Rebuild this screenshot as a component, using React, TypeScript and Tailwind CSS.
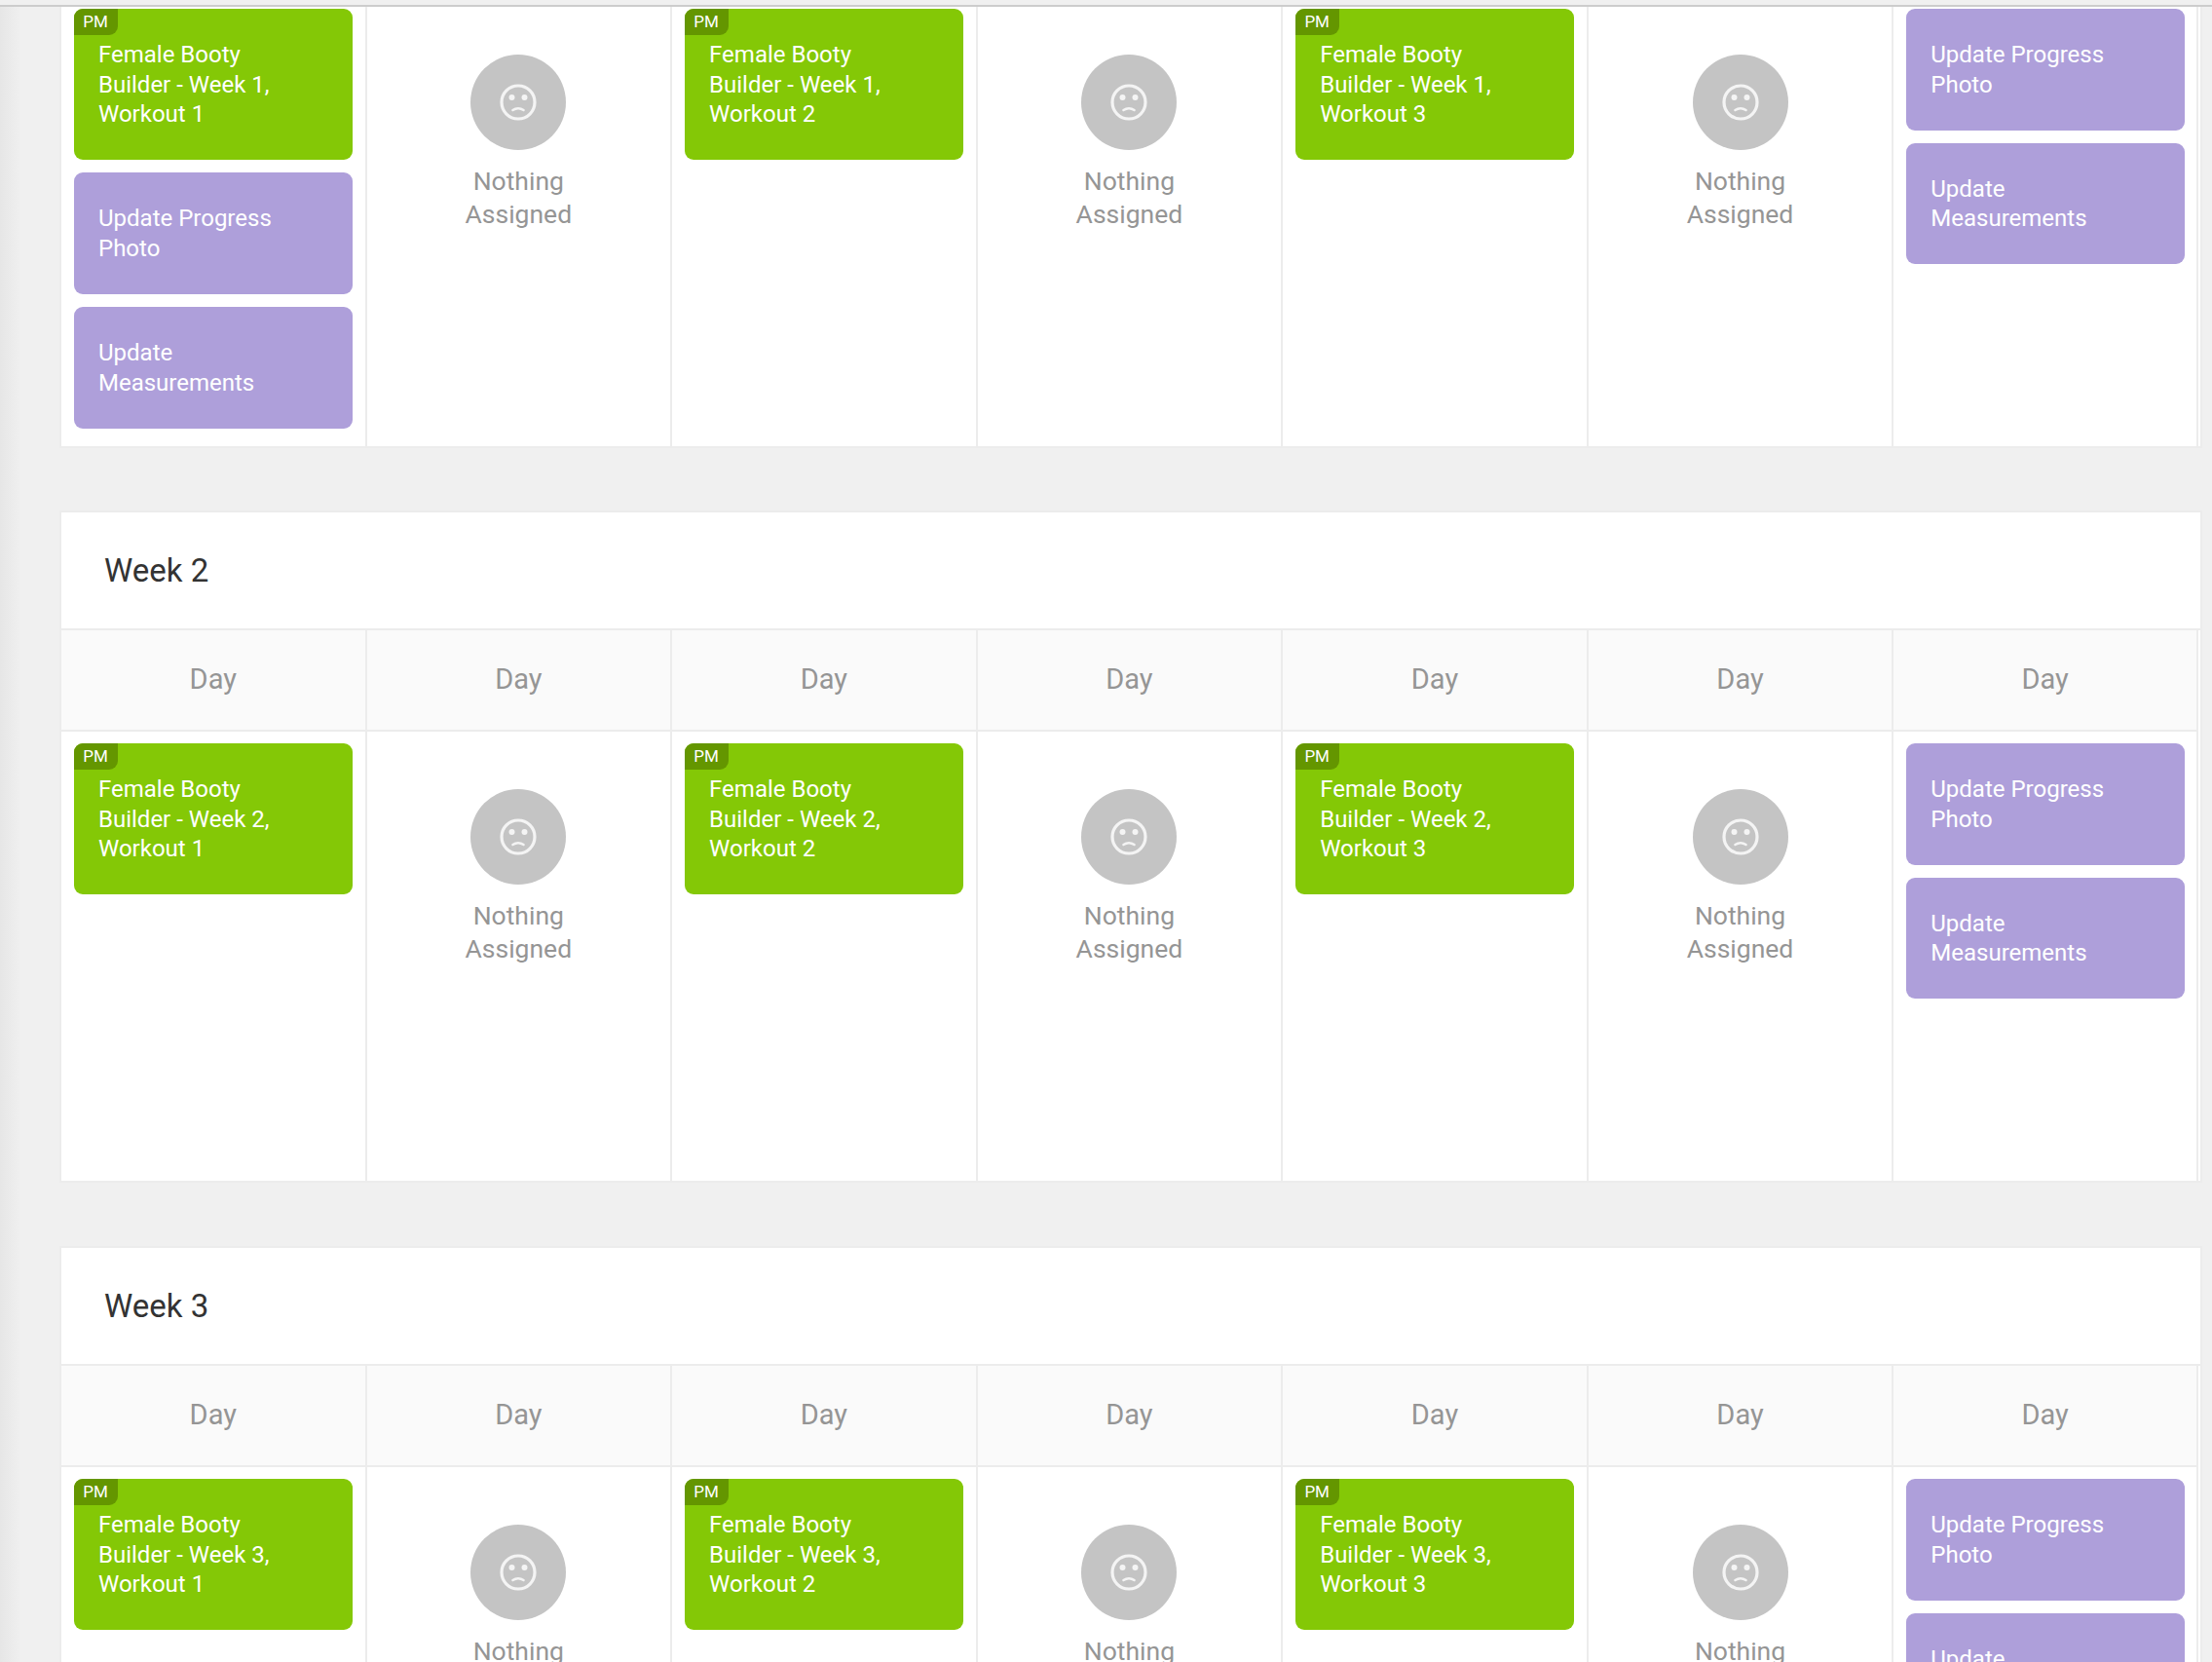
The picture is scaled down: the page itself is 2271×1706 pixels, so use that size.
const DAYS = [0, 1, 2, 3, 4, 5, 6];

function SadFace() {
  return (
    <svg width="40" height="40" viewBox="0 0 40 40" fill="none">
      <circle cx="20" cy="20" r="17" stroke="#f4f4f4" strokeWidth="3.2" />
      <circle cx="13.5" cy="15" r="3" fill="#f4f4f4" />
      <circle cx="26.5" cy="15" r="3" fill="#f4f4f4" />
      <path d="M14.5 28 Q20 24.5 25.5 28" stroke="#f4f4f4" strokeWidth="2.6" strokeLinecap="round" />
    </svg>
  );
}

function Nothing() {
  return (
    <div className="flex flex-col items-center pt-[59px]">
      <div className="flex h-[98px] w-[98px] items-center justify-center rounded-full bg-[#c4c4c4]">
        <SadFace />
      </div>
      <div className="mt-[15px] text-center text-[26.5px] leading-[34px] text-[#959595]">
        Nothing
        <br />
        Assigned
      </div>
    </div>
  );
}

function Workout({ week, n }: { week: number; n: number }) {
  return (
    <div className="relative rounded-[9px] bg-[#84c806] pb-[31.5px] pl-[25.5px] pr-[52px] pt-[32px] text-[24px] leading-[30.6px] text-white">
      <span className="absolute left-0 top-0 flex h-[27px] w-[45px] items-center justify-center rounded-br-[9px] rounded-tl-[9px] bg-[#649600] text-[17px] leading-none">
        PM
      </span>
      Female Booty Builder - Week {week}, Workout {n}
    </div>
  );
}

function Task({ label }: { label: string }) {
  return (
    <div className="rounded-[9px] bg-[#ae9fda] pb-[31.5px] pl-[25.5px] pr-[52px] pt-[32px] text-[24px] leading-[30.6px] text-white">
      {label}
    </div>
  );
}

function WeekCard({ week }: { week: number }) {
  return (
    <section className="mb-[65px] w-[2200px] border-2 border-[#ececec] bg-white first:mb-[64px]">
      <div className="flex h-[121px] items-center border-b-2 border-[#ececec] pl-[44px] text-[33px] text-[#333333]">
        Week {week}
      </div>
      <div className="grid w-[2194px] grid-cols-[repeat(6,313.55px)_1fr] border-b-2 border-[#ececec]">
        {DAYS.map((d) => (
          <div
            key={d}
            className="flex h-[102px] items-center justify-center border-r-2 border-[#ececec] bg-[#fafafa] text-[29px] text-[#959595]"
          >
            Day
          </div>
        ))}
      </div>
      <div className="grid h-[461px] w-[2194px] grid-cols-[repeat(6,313.55px)_1fr]">
        {DAYS.map((d) => (
          <div key={d} className="border-r-2 border-[#ececec]">
            {d === 6 ? (
              <div className="flex flex-col gap-[13px] px-[12.5px] pt-[12px]">
                <Task label="Update Progress Photo" />
                <Task label="Update Measurements" />
              </div>
            ) : d % 2 === 0 ? (
              <div className="flex flex-col gap-[13px] px-[12.5px] pt-[12px]">
                <Workout week={week} n={d / 2 + 1} />
                {week === 1 && d === 0 && (
                  <>
                    <Task label="Update Progress Photo" />
                    <Task label="Update Measurements" />
                  </>
                )}
              </div>
            ) : (
              <Nothing />
            )}
          </div>
        ))}
      </div>
    </section>
  );
}

export default function App() {
  return (
    <div className="flex h-[1706px] flex-col overflow-hidden bg-[#f0f0f0] font-[Roboto,sans-serif]">
      <div className="h-[7px] shrink-0 border-b-2 border-[#cccccc] bg-[#f0f0f0]" />
      <div className="flex min-h-0 flex-1 overflow-hidden">
        <div className="w-[22px] shrink-0 bg-gradient-to-r from-[#e6e6e6] to-[#f0f0f0]" />
        <main className="-mt-[237px] ml-[39px]">
          {[1, 2, 3].map((w) => (
            <WeekCard key={w} week={w} />
          ))}
        </main>
      </div>
    </div>
  );
}
